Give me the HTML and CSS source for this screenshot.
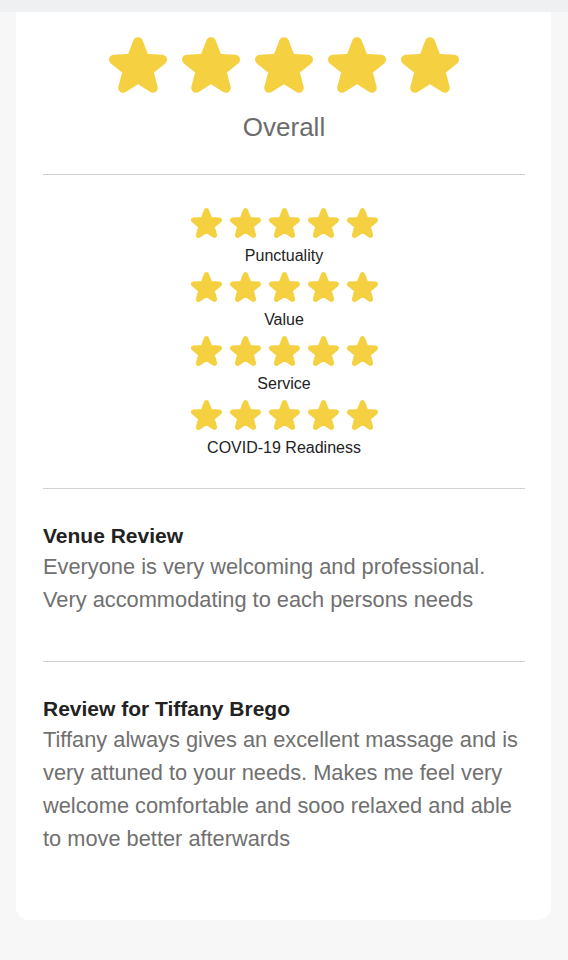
FILE: index.html
```html
<!DOCTYPE html>
<html lang="en">
<head>
    <meta charset="UTF-8">
    <meta name="viewport" content="width=device-width, initial-scale=1.0">
    <title>Review</title>
    <link rel="stylesheet" href="styles.css">
</head>
<body>
    <!-- star shape, reused everywhere -->
    <svg class="defs" width="0" height="0" aria-hidden="true">
        <symbol id="star" viewBox="8.76 9 82.5 79.1">
            <polygon points="50,16 59.11,39.46 84.24,40.88 64.74,56.79 71.16,81.12 50,67.5 28.84,81.12 35.26,56.79 15.76,40.88 40.89,39.46"
                     fill="#f5d142" stroke="#f5d142" stroke-width="14" stroke-linejoin="round"/>
        </symbol>
    </svg>

    <div class="top-bar"></div>

    <div class="card">
        <div class="overall">
            <div class="stars big">
                <svg><use href="#star"/></svg>
                <svg><use href="#star"/></svg>
                <svg><use href="#star"/></svg>
                <svg><use href="#star"/></svg>
                <svg><use href="#star"/></svg>
            </div>
            <div class="overall-label">Overall</div>
        </div>

        <hr class="divider">

        <div class="categories">
            <div class="category">
                <div class="stars small">
                    <svg><use href="#star"/></svg>
                    <svg><use href="#star"/></svg>
                    <svg><use href="#star"/></svg>
                    <svg><use href="#star"/></svg>
                    <svg><use href="#star"/></svg>
                </div>
                <div class="category-label">Punctuality</div>
            </div>
            <div class="category">
                <div class="stars small">
                    <svg><use href="#star"/></svg>
                    <svg><use href="#star"/></svg>
                    <svg><use href="#star"/></svg>
                    <svg><use href="#star"/></svg>
                    <svg><use href="#star"/></svg>
                </div>
                <div class="category-label">Value</div>
            </div>
            <div class="category">
                <div class="stars small">
                    <svg><use href="#star"/></svg>
                    <svg><use href="#star"/></svg>
                    <svg><use href="#star"/></svg>
                    <svg><use href="#star"/></svg>
                    <svg><use href="#star"/></svg>
                </div>
                <div class="category-label">Service</div>
            </div>
            <div class="category">
                <div class="stars small">
                    <svg><use href="#star"/></svg>
                    <svg><use href="#star"/></svg>
                    <svg><use href="#star"/></svg>
                    <svg><use href="#star"/></svg>
                    <svg><use href="#star"/></svg>
                </div>
                <div class="category-label">COVID-19 Readiness</div>
            </div>
        </div>

        <hr class="divider">

        <div class="review">
            <h2 class="review-title">Venue Review</h2>
            <p class="review-text">Everyone is very welcoming and professional. Very accommodating to each persons needs</p>
        </div>

        <hr class="divider">

        <div class="review last">
            <h2 class="review-title">Review for Tiffany Brego</h2>
            <p class="review-text">Tiffany always gives an excellent massage and is very attuned to your needs. Makes me feel very welcome comfortable and sooo relaxed and able to move better afterwards</p>
        </div>
    </div>
</body>
</html>
```

FILE: styles.css
```css
body {
    margin: 0;
    background-color: #f7f7f7;
    font-family: 'Liberation Sans', Arial, Helvetica, sans-serif;
    min-height: 960px;
}

.defs {
    position: absolute;
    width: 0;
    height: 0;
}

.top-bar {
    height: 12px;
    background-color: #eff0f2;
}

.card {
    margin: 0 17px 0 16px;
    background-color: #fff;
    border-radius: 0 0 13px 13px;
    padding: 25px 26px 65px 27px;
}

.stars {
    display: flex;
    justify-content: center;
}

.stars svg {
    display: block;
}

.stars.big {
    gap: 15px;
}

.stars.big svg {
    width: 58px;
    height: 56px;
}

.stars.small {
    gap: 8px;
}

.stars.small svg {
    width: 31px;
    height: 30px;
}

.overall-label {
    margin-top: 19px;
    text-align: center;
    font-size: 26px;
    line-height: 30px;
    color: #6b6b6b;
}

.divider {
    border: none;
    border-top: 1px solid #d2d2d2;
    margin: 0;
}

.overall {
    padding-bottom: 32px;
}

.categories {
    padding: 33px 0 30px;
}

.category {
    padding-bottom: 6px;
}

.category:last-child {
    padding-bottom: 0;
}

.category-label {
    margin-top: 8px;
    text-align: center;
    font-size: 16px;
    line-height: 20px;
    color: #222;
}

.review {
    padding: 31px 0 45px;
}

.review.last {
    padding-bottom: 0;
}

.review-title {
    margin: 0;
    font-size: 21px;
    line-height: 31px;
    font-weight: bold;
    color: #222;
}

.review-text {
    margin: 0;
    font-size: 21.8px;
    line-height: 32.7px;
    color: #707070;
}
```
